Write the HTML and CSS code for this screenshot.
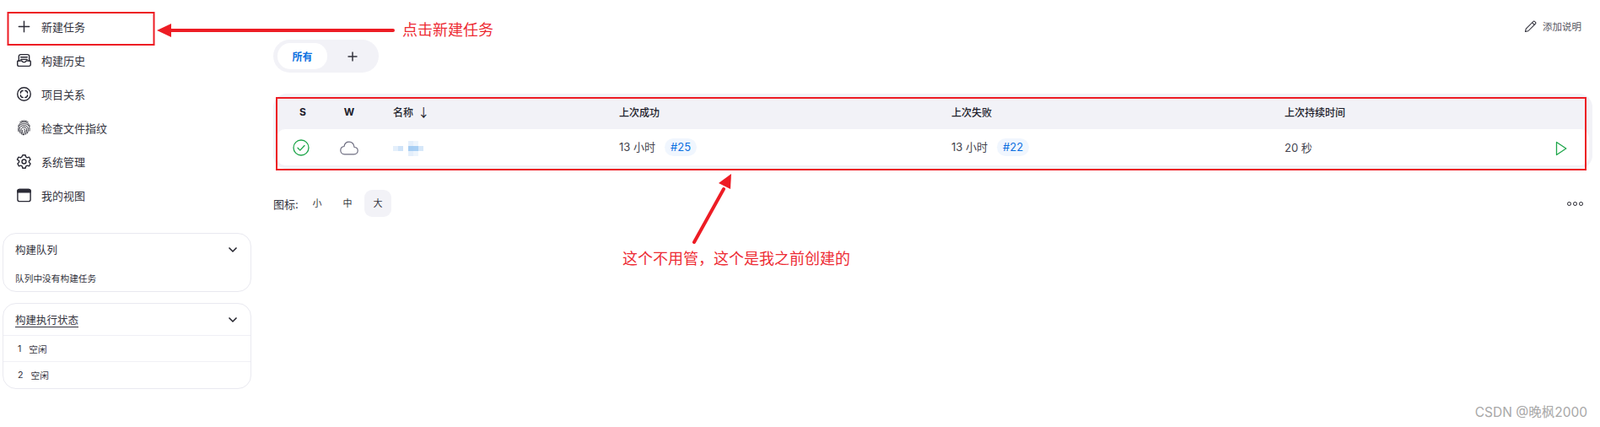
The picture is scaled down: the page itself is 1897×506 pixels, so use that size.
FILE: index.html
```html
<!DOCTYPE html>
<html>
	<head>
		<meta charset="UTF-8">
		<title>Dashboard</title>
		<link rel="stylesheet" href="styles.css">
	</head>
	<body>
		<div class="page">
			<div class="sidebar">
				<ul class="nav">
					<li>
						<svg class="icon" viewBox="0 0 20 20"><path d="M10 3.500v13M3.500 10h13"/></svg>
						新建任务
					</li>
					<li>
						<svg class="icon" viewBox="0 0 20 20"><path d="M3.500 11V5a2.200 2.200 0 0 1 2.200-2.200h8.600A2.200 2.200 0 0 1 16.500 5v6"/><path d="M6 6h8M6 8.800h8"/><path d="M1.800 11.500a1 1 0 0 1 1-1h4.400c.5 2.600 5.100 2.600 5.600 0h4.400a1 1 0 0 1 1 1v3.700a2 2 0 0 1-2 2H3.800a2 2 0 0 1-2-2z"/></svg>
						构建历史
					</li>
					<li>
						<svg class="icon" viewBox="0 0 20 20"><circle cx="10" cy="10" r="8.200"/><path d="M5.700 8.600c0-1.600 1.200-2.900 2.900-2.900M11.400 5.700c1.600 0 2.900 1.300 2.900 2.900M14.300 11.400c0 1.600-1.300 2.900-2.900 2.900M8.600 14.300c-1.600 0-2.900-1.300-2.900-2.900"/></svg>
						项目关系
					</li>
					<li>
						<svg class="icon thin" viewBox="2.500 1 15 18"><path d="M5.500 3.500c2.800-2 6.200-2 9 0"/><path d="M3.500 8c1.400-3.200 3.800-4.600 6.500-4.600S15.100 4.800 16.500 8"/><path d="M3.800 14c-.9-4.500.7-8.600 6.200-8.600 5 0 6.900 3.500 6.200 8"/><path d="M5.800 16c-.9-1.800-1.200-3.700-.9-5.300C5.400 8.500 7.300 7.400 10 7.400c3.200 0 4.700 2 4.600 4.600-.1 1.500-.3 2.700-.8 4"/><path d="M7.700 17.500c-.8-1.800-1.200-3.600-1-5.500.2-1.700 1.500-2.700 3.300-2.700 1.900 0 2.900 1.200 2.900 2.800 0 1.900-.3 3.600-1 5.200"/><path d="M10 11.300c.9 0 1.200.7 1.100 1.700-.1 1.800-.4 3.300-1 4.700M9.200 18c-.8-1.800-1-3.700-.8-5.400"/></svg>
						检查文件指纹
					</li>
					<li>
						<svg class="icon" viewBox="0 0 20 20"><path d="M8.300 1.800h3.400l.6 2.400 1.600.9 2.400-.7 1.700 3-1.800 1.700v1.800l1.800 1.700-1.700 3-2.400-.7-1.600.9-.6 2.400H8.300l-.6-2.400-1.600-.9-2.400.7-1.700-3 1.800-1.700V9.100L1.500 7.400l1.700-3 2.400.7 1.600-.9z"/><circle cx="10" cy="10" r="2.600"/></svg>
						系统管理
					</li>
					<li>
						<svg class="icon" viewBox="0 0 20 20"><rect x="2" y="2.500" width="16" height="15" rx="2.200"/><path class="bar" d="M2 6V4.700a2.200 2.200 0 0 1 2.200-2.200h11.600A2.200 2.200 0 0 1 18 4.700V6z"/></svg>
						我的视图
					</li>
				</ul>

				<div class="card">
					<div class="card-title">
						<span>构建队列</span>
						<svg class="chevron" viewBox="0 0 12 12"><path d="M1.500 3.500 6 8l4.500-4.500"/></svg>
					</div>
					<div class="card-empty">队列中没有构建任务</div>
				</div>

				<div class="card card-exec">
					<div class="card-title">
						<span class="link">构建执行状态</span>
						<svg class="chevron" viewBox="0 0 12 12"><path d="M1.500 3.500 6 8l4.500-4.500"/></svg>
					</div>
					<div class="exec-row"><span>1</span><span>空闲</span></div>
					<div class="exec-row"><span>2</span><span>空闲</span></div>
				</div>
			</div>

			<div class="main">
				<div class="toolbar">
					<svg class="pencil" viewBox="0 0 16 16"><path d="M1.500 14.500l.9-3.700L11.600 1.600a1.300 1.300 0 0 1 1.800 0l1 1a1.300 1.300 0 0 1 0 1.800L5.200 13.600z"/><path d="M10.200 3l2.800 2.800"/></svg>
					添加说明
				</div>

				<div class="tabs">
					<div class="tab active">所有</div>
					<div class="tab">
						<svg class="icon-sm" viewBox="0 0 12 12"><path d="M6 .5v11M.5 6h11"/></svg>
					</div>
				</div>

				<div class="table-wrap">
					<table class="jobs">
						<colgroup>
							<col class="c-s"><col class="c-w"><col class="c-name"><col class="c-ok"><col class="c-fail"><col class="c-time"><col class="c-run">
						</colgroup>
						<thead>
							<tr>
								<th class="mid strong">S</th>
								<th class="mid strong">W</th>
								<th>名称 <span class="sort">↓</span></th>
								<th>上次成功</th>
								<th>上次失败</th>
								<th>上次持续时间</th>
								<th></th>
							</tr>
						</thead>
						<tbody>
							<tr>
								<td class="mid">
									<svg class="status" viewBox="0 0 20 20"><circle cx="10" cy="10" r="9"/><path d="M6 10.300l2.800 2.800L14 7.500"/></svg>
								</td>
								<td class="mid">
									<svg class="weather" viewBox="0 0 22 17"><path d="M5.500 15.800h11.300c2.500 0 4.400-1.800 4.400-4.200 0-2.300-1.800-4-4.100-4.100C16.500 3.500 14 1.200 10.900 1.200 7.900 1.200 5.500 3.400 5 6.500 2.600 6.800.8 8.700.8 11.200c0 2.600 2 4.600 4.700 4.600z"/></svg>
								</td>
								<td>
									<svg class="blur" viewBox="0 0 36 18"><rect x="0" y="6" width="6" height="6" fill="#e4effb"/><rect x="6" y="6" width="6" height="6" fill="#cfe3f8"/><rect x="18" y="0" width="6" height="6" fill="#e4effb"/><rect x="18" y="6" width="6" height="6" fill="#a6cdf3"/><rect x="24" y="6" width="6" height="6" fill="#a9cff4"/><rect x="30" y="6" width="6" height="6" fill="#d6e7f9"/><rect x="18" y="12" width="6" height="6" fill="#e4effb"/><rect x="24" y="0" width="6" height="6" fill="#eef5fc"/><rect x="24" y="12" width="6" height="6" fill="#eef5fc"/></svg>
								</td>
								<td>13 小时<span class="build">#25</span></td>
								<td>13 小时<span class="build">#22</span></td>
								<td>20 秒</td>
								<td class="mid">
									<svg class="play" viewBox="0 0 14 18"><path d="M1.500 1.500v15L12.800 9z"/></svg>
								</td>
							</tr>
						</tbody>
					</table>
				</div>

				<div class="bottom-bar">
					<div class="sizes">
						<span class="sizes-label">图标:</span>
						<span class="size">小</span>
						<span class="size">中</span>
						<span class="size active">大</span>
					</div>
					<div class="dots"><i></i><i></i><i></i></div>
				</div>
			</div>
		</div>

		<!-- 标注 -->
		<svg class="marks" viewBox="0 0 1897 506">
			<rect x="9.500" y="15" width="173" height="38"/>
			<rect x="328" y="116" width="1552" height="85"/>
			<path class="line" d="M466 36H200"/>
			<path class="head" d="M186 36 203 28v16z"/>
			<path class="line" d="M823 287 858 224"/>
			<path class="head" d="M867 206 852 217 866 224z"/>
		</svg>
		<span class="note note-new">点击新建任务</span>
		<span class="note note-old">这个不用管，这个是我之前创建的</span>
		<span class="watermark">CSDN @晚枫2000</span>
	</body>
</html>
```
FILE: styles.css
```css
* {
	margin: 0;
	padding: 0;
	box-sizing: border-box;
}
ul, li {
	list-style: none;
}
body {
	font-family: Inter, "Noto Sans CJK SC", sans-serif;
	font-size: 13px;
	color: #33333d;
	background: #fff;
	overflow: hidden;
}

.page {
	display: flex;
	align-items: flex-start;
	height: 506px;
}

/* 左侧 */
.sidebar {
	width: 295px;
	margin: 11px 0 0 3px;
	flex: none;
}
.nav li {
	display: flex;
	align-items: center;
	gap: 11px;
	height: 40px;
	padding-left: 16px;
}
.icon {
	width: 19px;
	height: 19px;
	fill: none;
	stroke: #2b2b36;
	stroke-width: 1.500;
	stroke-linejoin: round;
	stroke-linecap: round;
}
.icon.thin {
	stroke-width: .9;
}
.icon .bar {
	fill: #2b2b36;
}

.card {
	border: 1px solid #e9e9f0;
	border-radius: 16px;
	margin-top: 25px;
	height: 70px;
	font-size: 12.500px;
}
.card-exec {
	margin-top: 13px;
	height: 102px;
}
.card-title {
	display: flex;
	align-items: center;
	justify-content: space-between;
	height: 37px;
	padding: 0 15px 0 14px;
}
.card-exec .card-title {
	height: 38px;
	border-bottom: 1px solid #f0f0f5;
}
.link {
	text-decoration: underline;
	text-underline-offset: 3px;
}
.chevron {
	width: 12px;
	height: 12px;
	fill: none;
	stroke: #20202a;
	stroke-width: 1.500;
}
.card-empty {
	padding: 8px 0 0 14px;
	font-size: 10.700px;
}
.exec-row {
	display: flex;
	gap: 9px;
	align-items: center;
	height: 30px;
	padding-left: 17px;
	font-size: 10.700px;
}
.exec-row + .exec-row {
	border-top: 1px solid #f0f0f5;
	height: 32px;
}

/* 右侧 */
.main {
	width: 1564px;
	margin-left: 26px;
	padding-top: 20px;
	flex: none;
}
.toolbar {
	display: flex;
	justify-content: flex-end;
	align-items: center;
	gap: 7px;
	height: 22px;
	padding-right: 13px;
	font-size: 11.500px;
	color: #555560;
}
.pencil {
	width: 15px;
	height: 15px;
	fill: none;
	stroke: #2b2b36;
	stroke-width: 1.100;
	stroke-linejoin: round;
}

.tabs {
	display: flex;
	width: 125px;
	height: 39px;
	margin-top: 5px;
	padding: 4px 5px;
	background: #f2f2f7;
	border-radius: 20px;
}
.tab {
	display: flex;
	align-items: center;
	justify-content: center;
	flex: none;
	width: 59px;
	border-radius: 15px;
}
.tab.active {
	background: #fff;
	color: #0b6fe0;
	font-size: 12px;
	font-weight: 700;
}
.icon-sm {
	width: 12px;
	height: 12px;
	fill: none;
	stroke: #33333d;
	stroke-width: 1.500;
}

.table-wrap {
	margin-top: 25px;
	padding: 0 4px 4px;
	height: 89px;
	background: #f2f2f7;
	border-radius: 16px;
}
.jobs {
	width: 1556px;
	table-layout: fixed;
	border-collapse: separate;
	border-spacing: 0;
}
.c-s { width: 62px; }
.c-w { width: 48px; }
.c-name { width: 268px; }
.c-ok { width: 394px; }
.c-fail { width: 395px; }
.c-time { width: 323px; }
.c-run { width: 66px; }

.jobs th {
	height: 42px;
	padding-left: 28px;
	text-align: left;
	font-size: 12px;
	font-weight: 500;
	color: #20202a;
}
.jobs td {
	height: 43px;
	padding-left: 28px;
	background: #fff;
	color: #44444e;
}
.jobs td:first-child {
	border-radius: 10px 0 0 10px;
}
.jobs td:last-child {
	border-radius: 0 10px 10px 0;
}
.jobs .mid {
	padding-left: 0;
	text-align: center;
}
.jobs .strong {
	font-weight: 700;
}
.jobs svg {
	display: block;
}
.jobs .mid svg {
	margin: 2px auto 0;
}
.jobs .mid .status {
	margin: 0 0 0 19px;
}
.sort {
	margin-left: 2px;
	font-family: "Noto Sans CJK SC", sans-serif;
	font-size: 14px;
	font-weight: 400;
}
.status {
	width: 20px;
	height: 20px;
	fill: none;
	stroke: #1ea64a;
	stroke-width: 1.300;
	stroke-linecap: round;
	stroke-linejoin: round;
}
.weather {
	width: 22px;
	height: 17px;
	fill: none;
	stroke: #6d6d80;
	stroke-width: 1.200;
}
.blur {
	width: 36px;
	height: 18px;
	margin-top: 2px;
}
.build {
	display: inline-block;
	height: 21px;
	margin-left: 11px;
	padding: 0 7px;
	line-height: 21px;
	background: #f0f6fe;
	border-radius: 11px;
	color: #0b6fe0;
}
.play {
	width: 14px;
	height: 18px;
	fill: none;
	stroke: #1ea64a;
	stroke-width: 1.300;
	stroke-linejoin: round;
}

.bottom-bar {
	display: flex;
	justify-content: space-between;
	align-items: center;
	margin-top: 25px;
	height: 32px;
}
.sizes {
	display: flex;
	align-items: center;
}
.sizes-label {
	width: 32px;
	font-size: 13px;
	white-space: nowrap;
}
.size {
	width: 32px;
	height: 32px;
	margin-left: 4px;
	line-height: 32px;
	text-align: center;
	font-size: 11px;
	border-radius: 9px;
}
.size.active {
	background: #f2f2f7;
}
.dots {
	display: flex;
	gap: 2px;
	margin-right: 11px;
}
.dots i {
	width: 5px;
	height: 5px;
	border: 1px solid #20202a;
	border-radius: 50%;
}

/* 标注 */
.marks {
	position: absolute;
	left: 0;
	top: 0;
	width: 1897px;
	height: 506px;
	pointer-events: none;
}
.marks rect {
	fill: none;
	stroke: #ed1c24;
	stroke-width: 2;
}
.marks .line {
	fill: none;
	stroke: #ed1c24;
	stroke-width: 4;
	stroke-linecap: round;
}
.marks .head {
	fill: #ed1c24;
}
.note {
	position: absolute;
	font-size: 18px;
	line-height: 24px;
	color: #ed2b33;
	white-space: nowrap;
}
.note-new {
	left: 477px;
	top: 24px;
}
.note-old {
	left: 738px;
	top: 295px;
}
.watermark {
	position: absolute;
	right: 15px;
	top: 479px;
	font-size: 15.500px;
	line-height: 20px;
	color: #a8a8a8;
}
```
